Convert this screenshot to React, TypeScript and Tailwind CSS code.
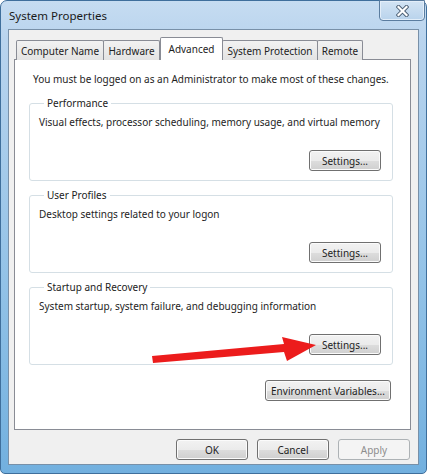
import React from "react";

const btn =
  "h-[21px] rounded-[3px] border border-[#707070] bg-[linear-gradient(to_bottom,#f2f2f2_0%,#ebebeb_50%,#dddddd_51%,#cfcfcf_100%)] shadow-[inset_0_0_0_1px_#fbfbfb] text-[#1e1e1e] flex items-center justify-center leading-none whitespace-nowrap";

function Btn({ label, w, disabled }: { label: string; w: string; disabled?: boolean }) {
  if (disabled) {
    return (
      <div
        className={`h-[21px] ${w} rounded-[3px] border border-[#adb2b5] bg-[#f4f4f4] text-[#8d8d8d] flex items-center justify-center leading-none`}
      >
        {label}
      </div>
    );
  }
  return <div className={`${btn} ${w}`}>{label}</div>;
}

function Group({ title, desc }: { title: string; desc: string }) {
  return (
    <fieldset className="ml-[14px] w-[364px] min-w-0 border border-[#d5dfe5] rounded-[3px] pl-[9px] pr-[11px] pb-[9px]">
      <legend className="ml-[5px] px-[3px] leading-[14px] text-[#222]">{title}</legend>
      <div className="mt-[5px] leading-[14px] whitespace-nowrap">{desc}</div>
      <div className="mt-[21px] flex justify-end">
        <Btn label="Settings..." w="w-[72px]" />
      </div>
    </fieldset>
  );
}

const tabs = [
  { name: "Computer Name", w: "w-[88px]" },
  { name: "Hardware", w: "w-[57px]" },
  { name: "Advanced", w: "w-[63px]", sel: true },
  { name: "System Protection", w: "w-[96px]" },
  { name: "Remote", w: "w-[46px]" },
];

export default function App() {
  return (
    <div className="relative w-[427px] h-[474px] font-['Noto_Sans',sans-serif] text-[10px] text-[#1e1e1e] overflow-hidden">
      <div className="w-full h-full rounded-t-[7px] rounded-b-[5px] border border-[#3f6f9c] bg-[linear-gradient(to_bottom,#c6dcf1_0%,#b9d4ee_8%,#92c2e7_60%,#72b0df_100%)] flex flex-col px-[7px] pb-[8px]">
        {/* title bar */}
        <div className="h-[28px] flex items-start justify-between">
          <div className="mt-[7px] ml-[1px] text-[11.5px] leading-[16px] text-[#1a1a1a]">System Properties</div>
          <div className="-mt-px mr-[-6px] w-[46px] h-[21px] rounded-b-[4px] border border-[#5b7da0] bg-[linear-gradient(to_bottom,#d3e4f4,#b9d3ec)] shadow-[inset_0_0_0_1px_#e3eef9] flex items-center justify-center">
            <svg width="13" height="12" viewBox="0 0 13 12">
              <path d="M2.5 2 L10.5 10 M10.5 2 L2.5 10" stroke="#4a5d72" strokeWidth="4" strokeLinecap="square" />
              <path d="M2.5 2 L10.5 10 M10.5 2 L2.5 10" stroke="#ffffff" strokeWidth="2.2" strokeLinecap="square" />
            </svg>
          </div>
        </div>
        {/* client area */}
        <div className="flex-1 bg-[#f0f0f0] border border-[#7890a8] flex flex-col">
          <div className="mt-[6px] ml-[7px] flex items-end h-[23px] relative z-10">
            {tabs.map((t, i) =>
              t.sel ? (
                <div
                  key={t.name}
                  className={`${t.w} h-[23px] -mb-px bg-white border border-b-0 border-[#898c95] rounded-t-[2px] flex items-start justify-center pt-[4px] leading-[14px] whitespace-nowrap`}
                >
                  {t.name}
                </div>
              ) : (
                <div
                  key={t.name}
                  className={`${t.w} h-[20px] -mb-px border border-b-0 border-[#898c95] ${i > 0 ? "-ml-px" : ""} rounded-t-[2px] bg-[linear-gradient(to_bottom,#f2f2f2,#e3e3e3)] flex items-center justify-center pt-[1px] leading-[14px] text-[#222] whitespace-nowrap`}
                >
                  {t.name}
                </div>
              )
            )}
          </div>
          <div className="ml-[5px] w-[397px] h-[371px] bg-white border border-[#898c95]">
            <div className="mt-[12px] ml-[18px] leading-[14px] whitespace-nowrap">
              You must be logged on as an Administrator to make most of these changes.
            </div>
            <div className="mt-[10px]">
              <Group title="Performance" desc="Visual effects, processor scheduling, memory usage, and virtual memory" />
            </div>
            <div className="mt-[7px]">
              <Group title="User Profiles" desc="Desktop settings related to your logon" />
            </div>
            <div className="mt-[7px]">
              <Group title="Startup and Recovery" desc="System startup, system failure, and debugging information" />
            </div>
            <div className="mt-[15px] mr-[19px] flex justify-end">
              <Btn label="Environment Variables..." w="w-[126px]" />
            </div>
          </div>
          <div className="mt-[9px] mr-[8px] flex justify-end gap-[9px]">
            <Btn label="OK" w="w-[72px]" />
            <Btn label="Cancel" w="w-[72px]" />
            <Btn label="Apply" w="w-[72px]" disabled />
          </div>
        </div>
      </div>
      <svg className="absolute inset-0 pointer-events-none" width="427" height="474" viewBox="0 0 427 474">
        <polygon
          points="152,356 284,344 282,337 316,345 287,361 284,352 153,363"
          fill="#ec1c1c"
        />
      </svg>
    </div>
  );
}
